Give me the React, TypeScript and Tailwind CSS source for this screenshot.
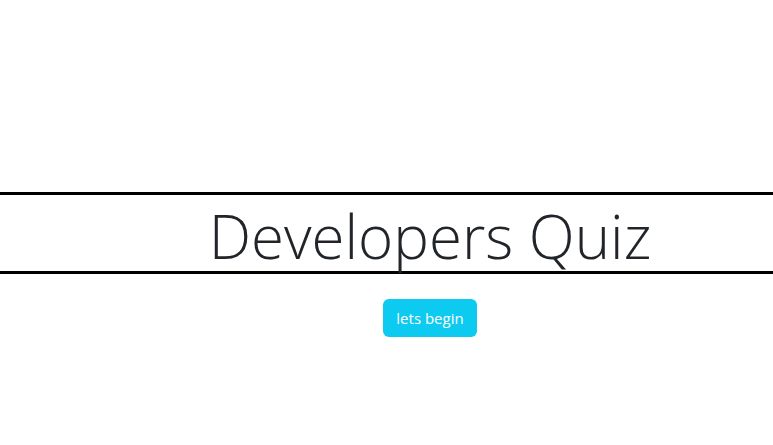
export default function App() {
  return (
    <div className="min-h-screen w-full bg-white pt-[192px] font-['Open_Sans',sans-serif]">
      <div className="flex h-[82px] items-center justify-center border-y-[3px] border-black pl-[87px]">
        <h1 className="pt-[6px] text-[60px] font-light leading-none text-[#212529]">Developers Quiz</h1>
      </div>
      <div className="mt-[25px] flex justify-center pl-[87px]">
        <button className="h-[38px] rounded-[6px] bg-[#0dcaf0] px-[13px] text-[15px] text-white">lets begin</button>
      </div>
    </div>
  )
}
